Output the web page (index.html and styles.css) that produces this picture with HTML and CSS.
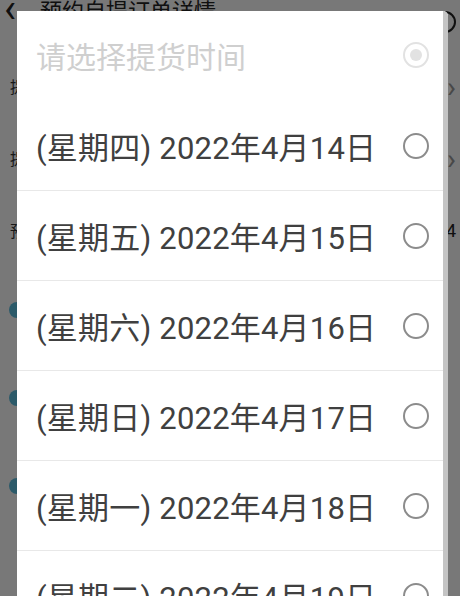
FILE: index.html
```html
<!DOCTYPE html>
<html lang="zh-CN">
<head>
    <meta charset="UTF-8">
    <meta name="viewport" content="width=device-width, initial-scale=1.0">
    <title>请选择提货时间</title>
    <link rel="stylesheet" href="styles.css">
</head>
<body>
    <div class="page">
        <header class="page-header">
            <span class="back">&lsaquo;</span>
            <span class="page-title">预约自提订单详情</span>
            <span class="head-icon"></span>
        </header>
        <div class="field"><span class="field-label">提</span><span class="chev">&rsaquo;</span></div>
        <div class="field"><span class="field-label">提</span><span class="chev">&rsaquo;</span></div>
        <div class="field"><span class="field-label">预</span><span class="field-value">4</span></div>
        <div class="pay"><span class="dot"></span></div>
        <div class="pay"><span class="dot"></span></div>
        <div class="pay"><span class="dot"></span></div>
    </div>

    <div class="mask"></div>

    <div class="dialog">
        <div class="dialog-body">
            <div class="dialog-title">
                <span>请选择提货时间</span>
                <span class="radio radio-title"></span>
            </div>
            <ul class="options">
                <li class="option"><span>(星期四) 2022年4月14日</span><span class="radio"></span></li>
                <li class="option"><span>(星期五) 2022年4月15日</span><span class="radio"></span></li>
                <li class="option"><span>(星期六) 2022年4月16日</span><span class="radio"></span></li>
                <li class="option"><span>(星期日) 2022年4月17日</span><span class="radio"></span></li>
                <li class="option"><span>(星期一) 2022年4月18日</span><span class="radio"></span></li>
                <li class="option"><span>(星期二) 2022年4月19日</span><span class="radio"></span></li>
            </ul>
        </div>
        <div class="scrollbar"></div>
    </div>
</body>
</html>
```

FILE: styles.css
```css
html, body {
  margin: 0;
  padding: 0;
}

body {
  width: 460px;
  height: 596px;
  overflow: hidden;
  position: relative;
  background: #fff;
  font-family: Roboto, "Noto Sans CJK SC", sans-serif;
}

/* page behind the mask */
.page {
  color: #333;
}

.page-header {
  display: flex;
  align-items: center;
  height: 30px;
  margin-top: -6px;
  padding: 0 4px;
}

.back {
  font-size: 40px;
  line-height: 30px;
  width: 36px;
  color: #222;
}

.page-title {
  flex: 1;
  font-size: 22px;
  color: #222;
}

.head-icon {
  width: 18px;
  height: 18px;
  border: 2px solid #222;
  border-radius: 50%;
  margin-top: 26px;
}

.field {
  display: flex;
  align-items: center;
  justify-content: space-between;
  height: 72px;
  padding: 0 4px 0 10px;
  font-size: 16px;
}

.field:first-of-type {
  margin-top: 26px;
}

.chev {
  font-size: 30px;
  color: #999;
}

.field-value {
  font-size: 18px;
  color: #222;
}

.pay {
  height: 88px;
  display: flex;
  align-items: center;
  padding-left: 9px;
}

.pay:first-of-type {
  margin-top: -6px;
}

.dot {
  width: 16px;
  height: 16px;
  border-radius: 50%;
  background: #5ebfe0;
}

.mask {
  position: absolute;
  inset: 0;
  background: rgba(0, 0, 0, 0.53);
}

/* dialog */
.dialog {
  position: absolute;
  left: 17px;
  top: 11px;
  width: 431px;
  height: 640px;
  display: flex;
  background: #fff;
  border-top-right-radius: 5px;
  overflow: hidden;
}

.dialog-body {
  flex: 1;
}

.scrollbar {
  width: 5px;
  background: #c4c4c4;
}

.dialog-title,
.option {
  display: flex;
  align-items: center;
  justify-content: space-between;
  height: 90px;
  padding: 0 14px 0 19px;
  box-sizing: border-box;
}

.dialog-title {
  font-size: 30px;
  color: #cfcfcf;
  padding-bottom: 2px;
}

.options {
  list-style: none;
  margin: 0;
  padding: 0;
}

.option {
  font-size: 31px;
  letter-spacing: 0.2px;
  color: #404040;
  border-bottom: 1px solid #e8e8e8;
}

.radio {
  width: 22px;
  height: 22px;
  border: 2px solid #8c8c8c;
  border-radius: 50%;
  box-sizing: content-box;
}

.radio-title {
  position: relative;
  border-color: #e2e2e2;
}

.radio-title::after {
  content: "";
  position: absolute;
  left: 5px;
  top: 5px;
  width: 12px;
  height: 12px;
  border-radius: 50%;
  background: #e2e2e2;
}
```
